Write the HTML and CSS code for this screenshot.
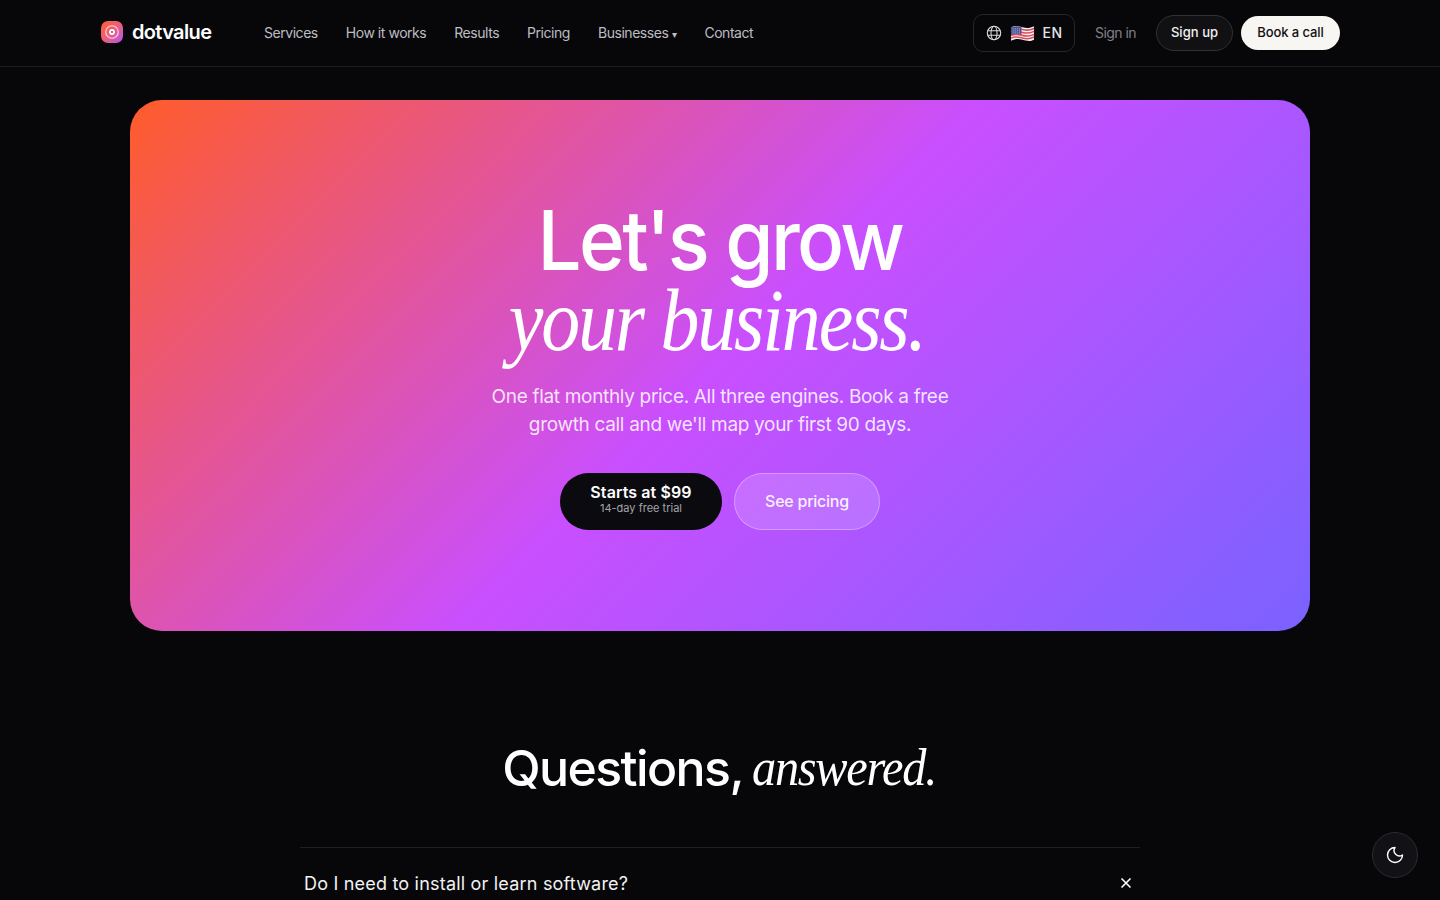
FILE: index.html
```html
<!DOCTYPE html>
<html lang="en">
<head>
<meta charset="utf-8">
<title>dotvalue</title>
<link rel="stylesheet" href="styles.css">
</head>
<body>
<header class="nav">
  <div class="nav-inner">
    <a class="brand" href="#">
      <span class="logo"><svg viewBox="0 0 22 22" width="16" height="16"><circle cx="11" cy="11" r="8.6" fill="none" stroke="#fff" stroke-opacity=".75" stroke-width="1.7"/><circle cx="11" cy="11" r="4" fill="#fff"/><circle cx="11" cy="11" r="1.6" fill="#e0559a"/></svg></span>
      <span class="brand-name">dotvalue</span>
    </a>
    <nav class="links">
      <a href="#">Services</a>
      <a href="#">How it works</a>
      <a href="#">Results</a>
      <a href="#">Pricing</a>
      <a href="#">Businesses <span class="caret">▾</span></a>
      <a href="#">Contact</a>
    </nav>
    <div class="actions">
      <button class="lang">
        <svg class="globe" viewBox="0 0 16 16" width="16" height="16" fill="none" stroke="#d8d8d8" stroke-width="1.1"><circle cx="8" cy="8" r="6.7"/><ellipse cx="8" cy="8" rx="3" ry="6.7"/><path d="M1.5 5.8h13M1.5 10.2h13"/></svg>
        <svg class="flag" viewBox="0 0 24 18" width="25" height="19"><path d="M1 3c4-2 7-1 11 0s7 1 11-1v13c-4 2-7 1-11 0s-7-1-11 1z" fill="#f4f2f2"/><path d="M1 5.2c4-2 7-1 11 0s7 1 11-1M1 8c4-2 7-1 11 0s7 1 11-1M1 10.8c4-2 7-1 11 0s7 1 11-1M1 13.4c4-2 7-1 11 0s7 1 11-1" fill="none" stroke="#dd4a5a" stroke-width="1.5"/><path d="M1 3c3-1.5 7-1.2 10-.3v7.4c-3-.9-7-.9-10 .5z" fill="#47518f"/><path d="M2.5 4.5h7M2.5 6.5h7M2.5 8.5h7" stroke="#c9cbe4" stroke-width=".9" stroke-dasharray="1 1"/></svg>
        <span class="lang-code">EN</span>
      </button>
      <a class="signin" href="#">Sign in</a>
      <a class="signup" href="#">Sign up</a>
      <a class="book" href="#">Book a call</a>
    </div>
  </div>
</header>

<main>
  <section class="hero-wrap">
    <div class="hero">
      <h1 class="hero-title"><span class="hero-line">Let's grow</span><em>your business.</em></h1>
      <p class="hero-sub">One flat monthly price. All three engines. Book a free growth call and we'll map your first 90 days.</p>
      <div class="cta">
        <a class="cta-dark" href="#"><strong>Starts at $99</strong><small>14-day free trial</small></a>
        <a class="cta-ghost" href="#">See pricing</a>
      </div>
    </div>
  </section>

  <section class="faq">
    <h2 class="faq-title"><span class="faq-lead">Questions,</span> <em>answered.</em></h2>
    <div class="faq-item">
      <span>Do I need to install or learn software?</span>
      <svg viewBox="0 0 12 12" width="12" height="12" fill="none" stroke="#fff" stroke-width="1.6"><path d="M1.5 1.5l9 9M10.5 1.5l-9 9"/></svg>
    </div>
  </section>
</main>

<button class="theme" aria-label="Toggle theme">
  <svg viewBox="0 0 24 24" width="20" height="20" fill="none" stroke="#fff" stroke-width="1.7" stroke-linejoin="round"><path d="M12 3a6.5 6.5 0 0 0 9 9 9 9 0 1 1-9-9z"/></svg>
</button>
</body>
</html>
```
FILE: styles.css
```css
* { box-sizing: border-box; }
html, body { margin: 0; height: 900px; overflow: hidden; }
body { background: #07070a; color: #fff; font-family: Inter, "Liberation Sans", sans-serif; }
a { color: inherit; text-decoration: none; }
button { font: inherit; color: inherit; cursor: pointer; }

.nav { height: 67px; border-bottom: 1px solid #1c1c20; }
.nav-inner { width: 1240px; height: 66px; margin: 0 auto; display: flex; align-items: center; }
.brand { display: flex; align-items: center; gap: 9px; width: 164px; padding: 0 0 2px 1px; }
.logo { width: 22px; height: 22px; border-radius: 7px; background: linear-gradient(135deg, #ff5f2e 0%, #ee5f7a 50%, #b455f5 100%); display: flex; align-items: center; justify-content: center; }
.brand-name { font-size: 20px; font-weight: 600; letter-spacing: -0.65px; }
.links { display: flex; gap: 28px; font-size: 14px; color: #bdbdc2; letter-spacing: -0.46px; padding-bottom: 2px; }
.caret { font-size: 10px; }
.actions { margin-left: auto; display: flex; align-items: center; }
.lang { width: 102px; height: 38px; border: 1px solid #26262b; border-radius: 10px; background: transparent; display: flex; align-items: center; justify-content: center; gap: 8px; font-size: 14px; font-weight: 500; color: #e4e4e6; padding: 0; letter-spacing: .5px; }
.lang-code { padding-bottom: 1px; }
.signin { margin-left: 20px; padding-bottom: 2px; font-size: 14px; color: #808085; letter-spacing: -0.55px; }
.signup { margin-left: 20px; width: 77px; height: 36px; padding-bottom: 2px; border: 1px solid #303035; border-radius: 18px; background: #111114; display: flex; align-items: center; justify-content: center; font-size: 13px; font-weight: 500; letter-spacing: .05px; color: #f2f2f2; }
.book { margin-left: 8px; width: 99px; height: 34px; padding-bottom: 2px; border-radius: 17px; background: #f7f6f2; color: #111; display: flex; align-items: center; justify-content: center; font-size: 13px; font-weight: 500; letter-spacing: -0.1px; }

.hero-wrap { padding-top: 33px; }
.hero { width: 1180px; height: 531px; margin: 0 auto; border-radius: 32px; background: linear-gradient(135deg, #ff5c2a 0%, #c94fff 50%, #7a62ff 100%); display: flex; flex-direction: column; align-items: center; padding-top: 100px; }
.hero-title { margin: 0; font-size: 83px; line-height: 80px; font-weight: 500; text-align: center; }
.hero-line { display: block; letter-spacing: -2.8px; transform: scaleX(.94); }
.hero-title em { display: block; font-family: "Liberation Serif", serif; font-weight: 400; font-size: 89px; letter-spacing: -2.4px; transform: translateX(-3px) scaleX(.875); }
.hero-sub { margin: 23px 0 0; width: 480px; font-size: 19px; line-height: 28px; text-align: center; color: rgba(255,255,255,.85); letter-spacing: -0.32px; }
.cta { margin-top: 34px; display: flex; gap: 12px; }
.cta-dark { width: 162px; height: 57px; padding-bottom: 6px; border-radius: 29px; background: #0b0b0f; display: flex; flex-direction: column; align-items: center; justify-content: center; }
.cta-dark strong { font-size: 16px; font-weight: 600; line-height: 19px; letter-spacing: .1px; }
.cta-dark small { font-size: 11px; line-height: 13px; color: #a4a4a9; }
.cta-ghost { width: 146px; height: 57px; padding-bottom: 2px; border-radius: 29px; background: rgba(255,255,255,.16); border: 1px solid rgba(255,255,255,.3); display: flex; align-items: center; justify-content: center; font-size: 16px; font-weight: 500; letter-spacing: -0.25px; color: rgba(255,255,255,.92); }

.faq { width: 840px; margin: 0 auto; padding-top: 107px; }
.faq-title { margin: 0; padding-right: 2px; display: flex; justify-content: center; gap: 9px; font-size: 50px; line-height: 60px; font-weight: 500; text-align: center; }
.faq-lead { letter-spacing: -1.6px; }
.faq-title em { font-family: "Liberation Serif", serif; font-weight: 400; font-size: 52px; letter-spacing: -1.4px; margin-right: -14px; transform: scaleX(.93); transform-origin: left center; }
.faq-item { margin-top: 49px; border-top: 1px solid #1f1f23; padding: 25px 8px 0 4px; display: flex; align-items: center; justify-content: space-between; font-size: 18px; line-height: 22px; color: #f2f2f2; letter-spacing: .2px; }
.faq-item svg { margin-bottom: 2px; }

.theme { position: fixed; right: 22px; bottom: 22px; width: 46px; height: 46px; border-radius: 50%; border: 1px solid #2c2c31; background: #111116; display: flex; align-items: center; justify-content: center; padding: 0; }
```
